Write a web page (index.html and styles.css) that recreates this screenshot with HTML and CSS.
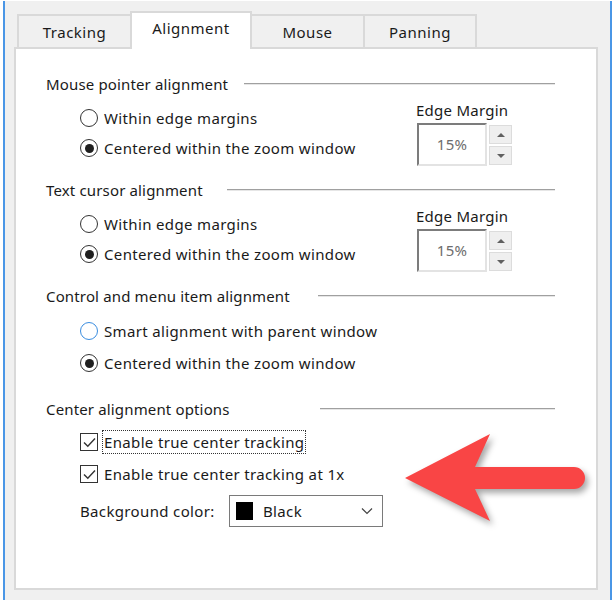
FILE: index.html
```html
<!DOCTYPE html>
<html lang="en">
<head>
  <meta charset="UTF-8" />
  <title>Alignment</title>
  <link rel="stylesheet" href="styles.css">
</head>
<body>
  <div class="window">
    <!-- Tab strip -->
    <div class="tabs">
      <div class="tab">Tracking</div>
      <div class="tab active">Alignment</div>
      <div class="tab">Mouse</div>
      <div class="tab">Panning</div>
    </div>

    <div class="panel">
      <!-- Mouse pointer -->
      <section class="group g1">
        <div class="group-head"><span class="group-title">Mouse pointer alignment</span><span class="rule"></span></div>
        <div class="group-body">
          <div class="options">
            <div class="opt"><span class="radio"></span>Within edge margins</div>
            <div class="opt"><span class="radio on"></span>Centered within the zoom window</div>
          </div>
          <div class="margin-box">
            <div class="margin-label">Edge Margin</div>
            <div class="spin">
              <div class="spin-field">15%</div>
              <div class="spin-btns">
                <span class="spin-btn up"></span>
                <span class="spin-btn down"></span>
              </div>
            </div>
          </div>
        </div>
      </section>

      <!-- Text cursor -->
      <section class="group g2">
        <div class="group-head"><span class="group-title">Text cursor alignment</span><span class="rule"></span></div>
        <div class="group-body">
          <div class="options">
            <div class="opt"><span class="radio"></span>Within edge margins</div>
            <div class="opt"><span class="radio on"></span>Centered within the zoom window</div>
          </div>
          <div class="margin-box">
            <div class="margin-label">Edge Margin</div>
            <div class="spin">
              <div class="spin-field">15%</div>
              <div class="spin-btns">
                <span class="spin-btn up"></span>
                <span class="spin-btn down"></span>
              </div>
            </div>
          </div>
        </div>
      </section>

      <!-- Controls and menus -->
      <section class="group g3">
        <div class="group-head"><span class="group-title">Control and menu item alignment</span><span class="rule"></span></div>
        <div class="group-body">
          <div class="options">
            <div class="opt"><span class="radio hover"></span>Smart alignment with parent window</div>
            <div class="opt"><span class="radio on"></span>Centered within the zoom window</div>
          </div>
        </div>
      </section>

      <!-- Center options -->
      <section class="group g4">
        <div class="group-head"><span class="group-title">Center alignment options</span><span class="rule"></span></div>
        <div class="options">
          <div class="opt">
            <span class="check"><svg width="15" height="15" viewBox="0 0 15 15"><path d="M2 7.5 L5.8 11.3 L13 3.5" fill="none" stroke="#333" stroke-width="1.4"/></svg></span>
            <span class="focus-text">Enable true center tracking</span>
          </div>
          <div class="opt">
            <span class="check"><svg width="15" height="15" viewBox="0 0 15 15"><path d="M2 7.5 L5.8 11.3 L13 3.5" fill="none" stroke="#333" stroke-width="1.4"/></svg></span>
            Enable true center tracking at 1x
          </div>
          <div class="color-row">
            <span class="color-label">Background color:</span>
            <div class="select">
              <span class="swatch"></span>
              <span>Black</span>
              <svg class="chevron" width="12" height="8" viewBox="0 0 12 8"><path d="M1 1.5 L6 6.5 L11 1.5" fill="none" stroke="#444" stroke-width="1.2"/></svg>
            </div>
          </div>
        </div>
      </section>
    </div>

    <!-- Callout arrow -->
    <svg class="arrow" width="210" height="120" viewBox="0 0 210 120">
      <path d="M8 53 L93 9 L78 42 L177 42 A11 11 0 0 1 177 64 L78 64 L93 96 Z" fill="#f94545"/>
    </svg>
  </div>
</body>
</html>
```

FILE: styles.css
```css
* {
  box-sizing: border-box;
}
body {
  margin: 0;
  background: #fff;
  font-family: "Noto Sans", "Open Sans", sans-serif;
  font-size: 15px;
  letter-spacing: 0.25px;
  color: #1a1a1a;
}
/* Dialog window */
.window {
  position: relative;
  margin: 1px 3px 0;
  height: 599px;
  background: #f0f0f0;
  border-left: 2px solid #4a96e6;
  border-right: 2px solid #4a96e6;
  padding: 10px 12px 0 9px;
}
/* Tabs */
.tabs {
  display: flex;
  align-items: flex-end;
  height: 36px;
  padding-left: 3px;
}
.tab {
  width: 115px;
  height: 33px;
  border: 2px solid #d9d9d9;
  border-bottom: 0;
  background: #f0f0f0;
  text-align: center;
  line-height: 20px;
  padding-top: 6px;
  letter-spacing: 0.5px;
}
.tab + .tab {
  margin-left: -2px;
}
.tab.active {
  position: relative;
  z-index: 1;
  width: 122px;
  height: 38px;
  margin-bottom: -2px;
  padding-top: 5px;
  background: #fff;
}
.tab:last-child {
  width: 114px;
}
/* Page panel */
.panel {
  height: 543px;
  border: 2px solid #d9d9d9;
  background: #fff;
  padding: 25px 41px 0 30px;
}
.group-head {
  display: flex;
  align-items: center;
  height: 20px;
  line-height: 20px;
}
.group-title {
  flex: none;
  letter-spacing: 0.15px;
}
.g1 .group-title { width: 198px; }
.g2 .group-title { width: 181px; }
.g3 .group-title { width: 272px; }
.g4 .group-title { width: 274px; }
.rule {
  flex: 1;
  height: 1px;
  margin-top: -1px;
  background: #a0a0a0;
  box-shadow: 0 1px 0 #e6e6e6;
}
.group-body {
  display: flex;
  height: 86px;
}
.g3 .group-body {
  height: 93px;
}
.options {
  width: 370px;
  padding: 9px 0 0 34px;
}
.g4 .options {
  padding-top: 7px;
}
.opt {
  display: flex;
  align-items: center;
  gap: 6px;
  height: 30px;
  white-space: nowrap;
  letter-spacing: 0.35px;
}
.g3 .opt,
.g4 .opt {
  height: 32px;
}
/* Radio buttons and check boxes */
.radio {
  flex: none;
  display: flex;
  align-items: center;
  justify-content: center;
  width: 18px;
  height: 18px;
  border: 1.5px solid #333;
  border-radius: 50%;
}
.radio.on::after {
  content: "";
  width: 9px;
  height: 9px;
  border-radius: 50%;
  background: #1f1f1f;
}
.radio.hover {
  border-color: #3a8de0;
}
.check {
  flex: none;
  display: flex;
  align-items: center;
  justify-content: center;
  width: 18px;
  height: 18px;
  border: 1.5px solid #333;
}
.focus-text {
  outline: 1px dotted #333;
  margin-left: -1px;
  padding: 0 1px;
  line-height: 22px;
}
/* Edge margin spinner */
.margin-box {
  padding-top: 6px;
}
.margin-label {
  line-height: 20px;
}
.spin {
  display: flex;
  gap: 2px;
  margin-top: 3px;
  margin-left: 1px;
}
.spin-field {
  width: 70px;
  height: 43px;
  border: 2px solid #e3e3e3;
  border-top-color: #7c7c7c;
  border-left-color: #7c7c7c;
  color: #6d6d6d;
  text-align: center;
  line-height: 39px;
}
.spin-btns {
  display: flex;
  flex-direction: column;
  gap: 2px;
  padding-top: 2px;
}
.spin-btn {
  display: flex;
  align-items: center;
  justify-content: center;
  width: 23px;
  height: 19px;
  background: #efefef;
  border: 1px solid #dcdcdc;
}
.spin-btn::after {
  content: "";
  border-left: 4px solid transparent;
  border-right: 4px solid transparent;
}
.spin-btn.up::after {
  border-bottom: 4px solid #606060;
}
.spin-btn.down::after {
  border-top: 4px solid #606060;
}
/* Colour drop-down */
.color-row {
  display: flex;
  align-items: center;
  margin-top: 5px;
  letter-spacing: 0.35px;
}
.color-label {
  width: 149px;
}
.select {
  display: flex;
  align-items: center;
  gap: 10px;
  width: 154px;
  height: 32px;
  padding: 0 9px 0 6px;
  border: 1px solid #7a7a7a;
}
.swatch {
  width: 17px;
  height: 18px;
  background: #000;
}
.chevron {
  margin-left: auto;
}
/* Red callout arrow over the dialog */
.arrow {
  position: absolute;
  left: 392px;
  top: 424px;
  filter: drop-shadow(3px 4px 3px rgba(0, 0, 0, 0.35));
}
```
